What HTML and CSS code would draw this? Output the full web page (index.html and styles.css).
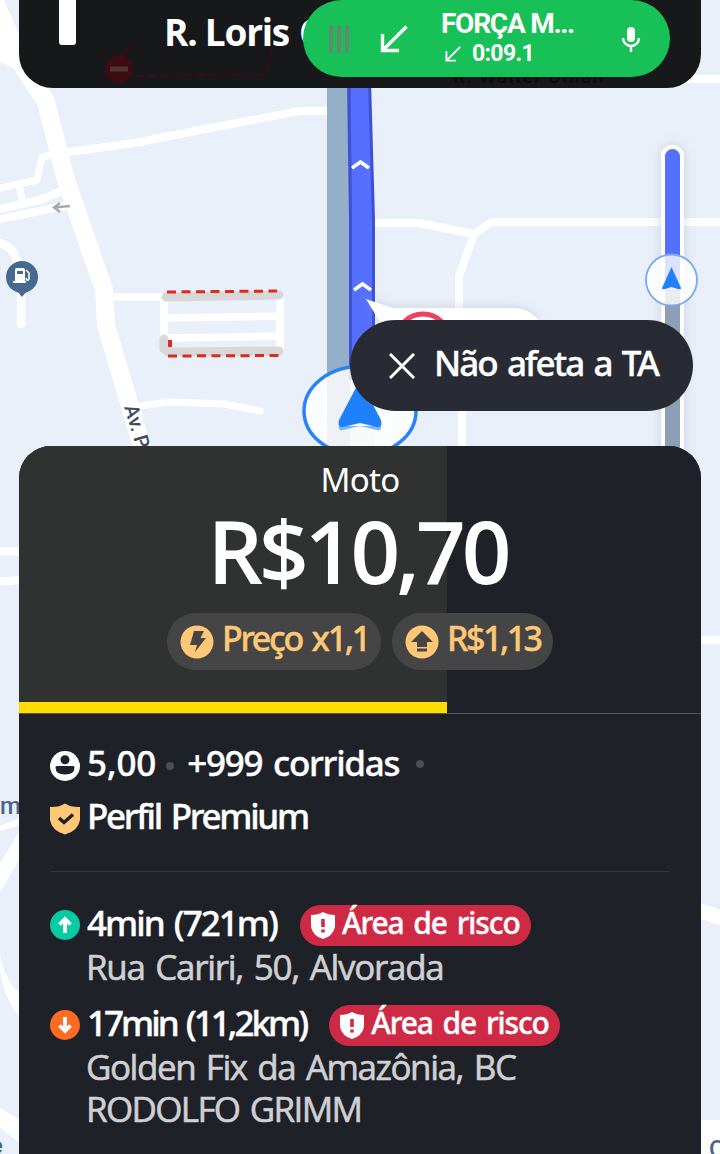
FILE: index.html
```html
<!DOCTYPE html>
<html lang="pt-BR">
<head>
<meta charset="utf-8">
<title>Corrida</title>
<link rel="stylesheet" href="styles.css">
</head>
<body>
<main class="screen">
  <svg class="map" viewBox="0 0 720 1154" width="720" height="1154" aria-hidden="true">
    <defs>
      <filter id="soft" x="-60%" y="-10%" width="220%" height="120%"><feDropShadow dx="0" dy="0" stdDeviation="6" flood-color="#7886a4" flood-opacity=".3"/></filter>
    </defs>
    <rect width="720" height="1154" fill="#e9f0fa"/>
    <g class="roads">
      <path d="M-6 0L24 68L46 102L66 180L104 290L106 325L143 450" stroke-width="18"/>
      <path d="M0 25V55L22 66" stroke-width="12"/>
      <path d="M68 152L135 143L200 130L300 111L330 111" stroke-width="8"/>
      <path d="M0 188L37 180L42 157L58 154M19 184L22 200" stroke-width="7"/>
      <path d="M0 209L40 200L64 190M0 219L64 206" stroke-width="8"/>
      <path d="M0 243Q14 247 17 261L21 280V324" stroke-width="8.500"/>
      <path d="M114 297H164V340M164 318L278 316M168 338L278 336M280 298V350" stroke-width="7.500"/>
      <path d="M141 406L168 402L225 404L260 411" stroke-width="7"/>
      <path d="M374 223L419 223L474 234L492 222H720M474 234L459 276V318M462 405V450" stroke-width="8"/>
      <path d="M684 79H720" stroke-width="8"/>
      <path d="M0 551.500H22M0 581.500L22 580M698 640H720" stroke-width="8"/>
      <path d="M698 910L724 919" stroke-width="15"/>
    </g>
    <path d="M0 826L20 818V825L0 831ZM20 830V858L0 892V864ZM0 955Q6 983 20 994V1016Q6 1005 0 970ZM0 1108L20 1120V1143L0 1128Z" fill="#fff"/>
    <path d="M700 1120H720V1154H700Z" fill="#fff"/>
    <g class="closed">
      <path d="M166 297L279 295M164 339V349L168 352L279 351" stroke="#d8d8d9" stroke-width="9" fill="none" stroke-linecap="round" stroke-linejoin="round"/>
      <path d="M167 292L277 291M168 356L280 355.500" stroke="#dd2923" stroke-width="3" stroke-dasharray="9 5.500"/>
      <path d="M170 340V347" stroke="#dd2923" stroke-width="4"/>
    </g>
    <path d="M70 206L55 207.500M60 203L54 207.500L60 212" fill="none" stroke="#aaa" stroke-width="2.500"/>
    <path d="M327 80H350V450H327Z" fill="#94b0c9"/>
    <path d="M350 360H375V450H350Z" fill="#d4d6d9"/>
    <path d="M347 80H371L375 220V380H349V220Z" fill="#3d51d2"/>
    <path d="M350.500 80H368L372 220V380H352V220Z" fill="#5570ff"/>
    <path d="M352 168L360.500 162L369 168M354 290L362.500 284L371 290" fill="none" stroke="#fff" stroke-width="3.500"/>
    <circle cx="22" cy="277" r="16" fill="#48698f"/>
    <path d="M17 291L22 297L27 291Z" fill="#48698f"/>
    <path d="M15 270Q15 268 17 268H23Q25 268 25 270V281H26V283H13V281H15Z" fill="#fff"/>
    <rect x="17" y="271" width="6" height="3" fill="#48698f"/>
    <path d="M26 270L29 273V279Q27 282 26 278" fill="none" stroke="#fff" stroke-width="1.500"/>
    <g filter="url(#soft)">
      <path d="M366 299L392 308H515Q530 309 540 322H380Z" fill="#fff"/>
      <circle cx="423" cy="341" r="27" fill="#fff" stroke="#ef3f63" stroke-width="5"/>
    </g>
    <ellipse cx="360" cy="411" rx="56" ry="44.500" fill="#fff" fill-opacity=".84" stroke="#2a83f4" stroke-width="3.500"/>
    <path d="M339 426Q338 431 343 430L360 426L377 430Q382 431 381 426Z" fill="#7ab5fb"/>
    <path d="M360 380L381 420Q383 428 377 427L360 423L343 427Q337 428 339 420Z" fill="#1e80fa"/>
    <g filter="url(#soft)"><rect x="661" y="145" width="23" height="330" rx="11.500" fill="#fff"/></g>
    <path d="M665 280V156.500A7.500 7.500 0 0 1 680 156.500V280Z" fill="#5570ff"/>
    <path d="M665 280H680V450H665Z" fill="#8f9eb7"/>
    <circle cx="671.500" cy="280" r="25.500" fill="#fff" fill-opacity=".8" stroke="#79aae9" stroke-width="1.800"/>
    <path d="M671.500 267L681 288Q681 290 678 289L671.500 287L665 289Q662 290 662 288Z" fill="#1e80fa"/>
    <text class="street" transform="translate(124 407) rotate(73)" font-size="20">Av. P</text>
    <text class="place" x="0" y="814" font-size="24">m</text>
    <text class="place" x="-9" y="1153" font-size="22">e</text>
    <text class="place" x="709" y="1157" font-size="24">C</text>
  </svg>

  <header class="nav">
    <svg class="nav-art" viewBox="0 0 682 88" width="682" height="88" aria-hidden="true">
      <rect x="40" y="-6" width="17" height="51" rx="3" fill="#fff"/>
      <circle cx="100" cy="69" r="14" fill="#3d0b10"/>
      <path d="M91 69H109" stroke="#50363a" stroke-width="5"/>
      <path d="M118 76L246 74L254 50M106 52L115 42" fill="none" stroke="#3d0b10" stroke-width="2.500" stroke-dasharray="7 5"/>
      <text x="434" y="83" class="ghost">R. Walter Dillan</text>
    </svg>
    <span class="nav-street">R. Loris</span><span class="nav-rest">C</span>
  </header>

  <section class="call">
    <svg viewBox="0 0 22 28" width="22" height="28"><path d="M3 2V26M11 2V26M19 2V26" stroke="#65876f" stroke-width="4" stroke-linecap="round"/></svg>
    <svg class="call-arrow" viewBox="0 0 28 28" width="28" height="28"><path d="M26.500 1.500L3 25M2.500 9V25.500H19" fill="none" stroke="#fff" stroke-width="3.400"/></svg>
    <div class="call-text">
      <div class="call-name">FORÇA M...</div>
      <div class="call-time"><svg viewBox="0 0 28 28" width="16" height="16"><path d="M26.500 1.500L3 25M2.500 9V25.500H19" fill="none" stroke="#fff" stroke-width="3.200"/></svg><span>0:09.1</span></div>
    </div>
    <svg class="call-mic" viewBox="0 0 20 26" width="20" height="26"><rect x="6" y="1" width="8" height="15" rx="4" fill="#fff"/><path d="M2 12A8 8 0 0 0 18 12M10 20V26" fill="none" stroke="#fff" stroke-width="2.400"/></svg>
  </section>

  <section class="toast">
    <svg viewBox="0 0 26 26" width="26" height="26"><path d="M1 1L25 25M25 1L1 25" stroke="#fff" stroke-width="3"/></svg>
    <span>Não afeta a TA</span>
  </section>

  <article class="offer">
    <header class="fare">
      <div class="fare-type">Moto</div>
      <div class="fare-price">R$10,70</div>
      <div class="chips">
        <div class="chip chip-boost">
          <svg viewBox="0 0 34 34" width="34" height="34"><circle cx="17" cy="17" r="16.500" fill="#ffc877"/><path d="M14 6H24L20.500 13H26L15 27L17 20H10Z" fill="#444544"/></svg>
          <span>Preço x1,1</span>
        </div>
        <div class="chip">
          <svg viewBox="0 0 34 34" width="34" height="34"><circle cx="17" cy="17" r="16.500" fill="#ffc877"/><path d="M17 6L28 17H22V22H12V17H6ZM12 23.500H22V26.500H12Z" fill="#444544"/></svg>
          <span>R$1,13</span>
        </div>
      </div>
      <div class="timer"></div>
    </header>
    <div class="details">
      <div class="row">
        <svg viewBox="0 0 30 30" width="30" height="30"><circle cx="15" cy="15" r="15" fill="#fff"/><circle cx="15" cy="8.800" r="4.500" fill="#1f2129"/><path d="M5.500 16.500Q5.500 15 7 15H23Q24.500 15 24.500 16.500Q24.500 23.500 15 23.500Q5.500 23.500 5.500 16.500Z" fill="#1f2129"/></svg>
        <span class="rating">5,00</span><i class="dot"></i><span class="rides">+999 corridas</span><i class="dot dot-last"></i>
      </div>
      <div class="row">
        <svg viewBox="0 0 30 32" width="30" height="32"><path d="M15 .5Q21 4.500 30 4V17Q28 28 15 31.500Q2 28 0 17V4Q9 4.500 15 .5Z" fill="#ffc877"/><path d="M9 15L14 19.500L23 11.500" fill="none" stroke="#1f2129" stroke-width="3.500"/></svg>
        <span class="profile">Perfil Premium</span>
      </div>
      <hr class="rule">
      <div class="row leg">
        <svg viewBox="0 0 30 30" width="30" height="30"><circle cx="15" cy="15" r="15" fill="#06cba5"/><path d="M15 23V9M9.500 14.500L15 9L20.500 14.500" fill="none" stroke="#fff" stroke-width="3.800"/></svg>
        <span class="pickup">4min (721m)</span>
        <div class="risk"><svg viewBox="0 0 24 27" width="24" height="27"><path d="M12 0Q17 3 24 3V15Q22 24 12 27Q2 24 0 15V3Q7 3 12 0Z" fill="#fff"/><path d="M12 7V15M12 17.500V20.500" stroke="#cf2a45" stroke-width="3.600"/></svg><span>Área de risco</span></div>
      </div>
      <p class="address">Rua Cariri, 50, Alvorada</p>
      <div class="row leg">
        <svg viewBox="0 0 30 30" width="30" height="30"><circle cx="15" cy="15" r="15" fill="#ff6b20"/><path d="M15 7V21M9.500 15.500L15 21L20.500 15.500" fill="none" stroke="#fff" stroke-width="3.800"/></svg>
        <span class="dropoff">17min (11,2km)</span>
        <div class="risk"><svg viewBox="0 0 24 27" width="24" height="27"><path d="M12 0Q17 3 24 3V15Q22 24 12 27Q2 24 0 15V3Q7 3 12 0Z" fill="#fff"/><path d="M12 7V15M12 17.500V20.500" stroke="#cf2a45" stroke-width="3.600"/></svg><span>Área de risco</span></div>
      </div>
      <p class="address address-drop">Golden Fix da Amazônia, BC<br><span class="city">RODOLFO GRIMM</span></p>
    </div>
  </article>
</main>
</body>
</html>
```
FILE: styles.css
```css
* { box-sizing: border-box; }
body { margin: 0; background: #e9f0fa; font-family: "Noto Sans", "Open Sans", sans-serif; }
.screen { position: relative; width: 720px; height: 1154px; overflow: hidden; color: #fff; }
svg { display: block; flex: none; }
span { white-space: nowrap; }

/* Map */
.map { position: absolute; inset: 0; }
.roads path { fill: none; stroke: #fff; stroke-linejoin: round; stroke-linecap: round; }
.street { fill: #3c4d61; font-family: Roboto, sans-serif; font-weight: 500; }
.place { fill: #48648c; font-family: Roboto, sans-serif; font-weight: 500; }

/* Navigation banner */
.nav { position: absolute; left: 19px; top: 0; width: 682px; height: 88px; border-radius: 0 0 34px 34px; background: #17181a; overflow: hidden; display: flex; padding-left: 145px; line-height: 64px; font-size: 37px; font-weight: 700; font-family: "Open Sans", sans-serif; }
.nav-art { position: absolute; left: 0; top: 0; }
.nav-street { letter-spacing: -1.24px; }
.nav-rest { margin-left: 10px; }
.ghost { fill: #0b0c0e; font: 500 19px Roboto, sans-serif; letter-spacing: 1.4px; }

/* Call pill */
.call { position: absolute; left: 303px; top: 0; width: 367px; height: 77px; padding-left: 25px; border-radius: 39px; background: #18c058; display: flex; align-items: center; font-family: Roboto, sans-serif; font-weight: 700; }
.call-arrow { margin-left: 30px; }
.call-text { margin-left: 33px; width: 134px; white-space: nowrap; }
.call-name { font-size: 28px; line-height: 31px; letter-spacing: -1.26px; }
.call-time { display: flex; align-items: center; gap: 11px; padding-left: 4px; font-size: 23px; line-height: 30px; letter-spacing: -.66px; }
.call-mic { margin-left: 46px; }

/* Toast */
.toast { position: absolute; left: 350px; top: 320px; width: 343px; height: 91px; padding-left: 39px; border-radius: 46px; background: #282b34; display: flex; align-items: center; gap: 19px; font-size: 35px; font-weight: 500; word-spacing: 3px; letter-spacing: -1.93px; -webkit-text-stroke: .4px; }
.toast span { padding-bottom: 6px; }

/* Offer card */
.offer { position: absolute; left: 19px; top: 446px; width: 682px; height: 708px; border-radius: 32px 32px 0 0; background: #1f2129; overflow: hidden; }
.fare { position: relative; height: 268px; padding-top: 14px; border-bottom: 1px solid #53555b; background: linear-gradient(90deg, #303231 428px, #1f2129 428px); text-align: center; }
.fare-type { font-size: 33px; line-height: 40px; letter-spacing: -.7px; }
.fare-price { margin-right: 5px; font-family: "Open Sans", sans-serif; font-size: 87px; line-height: 101px; font-weight: 600; letter-spacing: -4px; }
.chips { display: flex; justify-content: center; gap: 11px; margin-top: 12px; }
.chip { display: flex; align-items: center; gap: 8px; width: 161px; height: 57px; padding-left: 13px; border-radius: 29px; background: #444544; color: #ffc877; font-size: 34px; font-weight: 500; line-height: 40px; letter-spacing: -2.5px; -webkit-text-stroke: .4px; }
.chip-boost { width: 214px; word-spacing: 3px; letter-spacing: -2.29px; }
.chip span { padding-bottom: 8px; }
.timer { position: absolute; left: 0; bottom: 0; width: 428px; height: 11px; background: #ffdd00; }

.details { padding: 25px 31px 0; }
.row { display: flex; align-items: center; height: 53px; font-size: 35px; font-weight: 500; word-spacing: 3px; -webkit-text-stroke: .4px; }
.row > span { margin-left: 7px; padding-bottom: 6px; }
.dot { width: 8px; height: 8px; margin-left: 10px; border-radius: 50%; background: #4c4e54; }
.row > .rides { margin-left: 13px; letter-spacing: -1.27px; }
.dot-last { margin: 0 0 4px 17px; }
.rating { letter-spacing: -.1px; }
.profile { letter-spacing: -2.3px; }
.pickup { letter-spacing: -1.98px; }
.dropoff { letter-spacing: -2.98px; }
.rule { height: 1px; margin: 26px 0 30px; border: 0; background: #34363d; }
.leg { height: 46px; }
.risk { display: flex; align-items: center; gap: 7px; margin-left: 23px; width: 231px; height: 41px; padding-left: 11px; border-radius: 21px; background: #cf2a45; font-size: 30px; letter-spacing: -1.1px; }
.risk span { padding-bottom: 6px; }
.address { margin: 0 0 17px 36px; font-family: "Open Sans", sans-serif; font-size: 35px; line-height: 37px; color: #d0d0d2; white-space: nowrap; word-spacing: 3px; letter-spacing: -1.31px; -webkit-text-stroke: .6px; }
.address-drop { margin-top: -2px; line-height: 42px; letter-spacing: -1.45px; }
.city { letter-spacing: -1.66px; }
```
